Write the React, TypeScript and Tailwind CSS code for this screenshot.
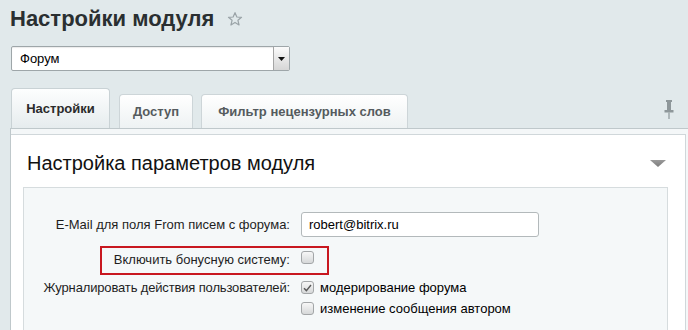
import React from "react";

const Checkbox: React.FC<{ checked?: boolean }> = ({ checked }) => (
  <span className="relative inline-flex w-[13px] h-[13px] shrink-0 rounded-[3px] border border-[#a3a6a8] bg-gradient-to-b from-[#f7f7f7] to-[#d6d8d9] items-center justify-center">
    {checked && (
      <svg width="9" height="8" viewBox="0 0 9 8">
        <path d="M1 4.2 L3.4 6.6 L8 1" fill="none" stroke="#5a5a5a" strokeWidth="1.4" />
      </svg>
    )}
  </span>
);

const Tab: React.FC<{ label: string; active?: boolean; width: string }> = ({
  label,
  active,
  width,
}) => (
  <div
    className={
      active
        ? "h-[40px] w-[99px] flex items-center justify-center rounded-t-[4px] border border-b-0 border-[#c9d2d5] bg-gradient-to-b from-[#fdfefe] to-[#e6ecee] text-[13px] font-bold text-[#2b2b2b]"
        : `h-[34px] ${width} flex items-center justify-center rounded-t-[4px] border border-b-0 border-[#cdd5d8] bg-gradient-to-b from-[#ffffff] to-[#eef2f3] text-[13px] font-bold text-[#555b5e]`
    }
  >
    {label}
  </div>
);

const App: React.FC = () => {
  return (
    <div className="w-[688px] h-[330px] overflow-hidden bg-[#e1e9eb] font-['Liberation_Sans',Arial,sans-serif] text-[#222]">
      {/* title */}
      <div className="pl-[10px] pt-[6px] flex items-center gap-[13px] h-[31px]">
        <h1 className="text-[22px] leading-[25px] font-bold text-[#2a2f31]">
          Настройки модуля
        </h1>
        <svg width="16" height="16" viewBox="0 0 24 24" className="mt-[1px]">
          <path
            d="M12 2.5 L14.8 9 L21.8 9.5 L16.4 14 L18.1 21 L12 17.2 L5.9 21 L7.6 14 L2.2 9.5 L9.2 9 Z"
            fill="none"
            stroke="#9aa3a7"
            strokeWidth="1.8"
            strokeLinejoin="round"
          />
        </svg>
      </div>

      {/* module select */}
      <div className="ml-[11px] mt-[15px] w-[279px] h-[25px] flex rounded-[2px] border border-[#9ea6a9] bg-white shadow-[inset_0_1px_1px_rgba(0,0,0,0.08)]">
        <div className="flex-1 pl-[8px] flex items-center text-[13px] text-black">
          Форум
        </div>
        <div className="w-[16px] flex items-center justify-center border-l border-[#a5a5a5] bg-gradient-to-b from-[#fbfbfb] to-[#d6d6d6]">
          <svg width="7" height="4" viewBox="0 0 7 4">
            <path d="M0 0 H7 L3.5 4 Z" fill="#111" />
          </svg>
        </div>
      </div>

      {/* tabs */}
      <div className="mt-[17px] pl-[11px] pr-[14px] flex items-end h-[40px]">
        <Tab label="Настройки" active width="w-[99px]" />
        <div className="ml-[9px]">
          <Tab label="Доступ" width="w-[74px]" />
        </div>
        <div className="ml-[8px]">
          <Tab label="Фильтр нецензурных слов" width="w-[207px]" />
        </div>
        <div className="ml-auto self-center mt-[2px]">
          <svg width="10" height="19" viewBox="0 0 10 19">
            <rect x="2" y="0" width="6" height="2" fill="#8e979a" />
            <rect x="3" y="2" width="4" height="8" fill="#8e979a" />
            <rect x="0.5" y="10" width="9" height="2.5" fill="#8e979a" />
            <rect x="4.4" y="12.5" width="1.2" height="6.5" fill="#8e979a" />
          </svg>
        </div>
      </div>

      {/* panel */}
      <div className="ml-[10px] border-l border-t border-[#bfc8cb] bg-[#f4f7f8] pt-[5px]">
        <div className="mr-[2px] border-t border-r border-[#d0d7da] bg-white">
          <div className="pl-[16px] pr-[19px] pt-[17px] flex items-center justify-between">
            <h2 className="text-[20px] leading-[22px] text-[#111]">
              Настройка параметров модуля
            </h2>
            <svg width="16" height="7" viewBox="0 0 16 7">
              <defs>
                <linearGradient id="tri" x1="0" y1="0" x2="0" y2="1">
                  <stop offset="0" stopColor="#9a9a9a" />
                  <stop offset="1" stopColor="#7c7c7c" />
                </linearGradient>
              </defs>
              <path d="M0 0 H16 L8 7 Z" fill="url(#tri)" />
            </svg>
          </div>

          <div className="ml-[12px] mr-[17px] mt-[13px] border-t border-l border-r border-[#d6dcde] bg-[#f5f8f9] pt-[24px] pb-[20px] text-[13px] text-[#1e1e1e]">
            {/* email */}
            <div className="flex items-center h-[25px]">
              <div className="w-[266px] text-right">
                E-Mail для поля From писем с форума:
              </div>
              <div className="ml-[11px] w-[238px] h-[25px] rounded-[3px] border border-[#b3b9bb] bg-white pl-[7px] flex items-center text-black">
                robert@bitrix.ru
              </div>
            </div>

            {/* bonus */}
            <div className="relative mt-[12px] flex items-center h-[21px]">
              <div className="w-[266px] text-right">Включить бонусную систему:</div>
              <div className="ml-[11px]">
                <Checkbox />
              </div>
              <div className="absolute left-[76px] top-[-3px] w-[229px] h-[29px] border-2 border-[#c8171f]" />
            </div>

            {/* journal */}
            <div className="mt-[7px] flex items-center h-[21px]">
              <div className="w-[266px] text-right tracking-[-0.15px]">
                Журналировать действия пользователей:
              </div>
              <div className="ml-[11px] flex items-center gap-[6px] text-black">
                <Checkbox checked />
                модерирование форума
              </div>
            </div>
            <div className="flex items-center h-[21px]">
              <div className="w-[266px]" />
              <div className="ml-[11px] flex items-center gap-[6px] text-black">
                <Checkbox />
                изменение сообщения автором
              </div>
            </div>
          </div>
        </div>
      </div>
    </div>
  );
};

export default App;
